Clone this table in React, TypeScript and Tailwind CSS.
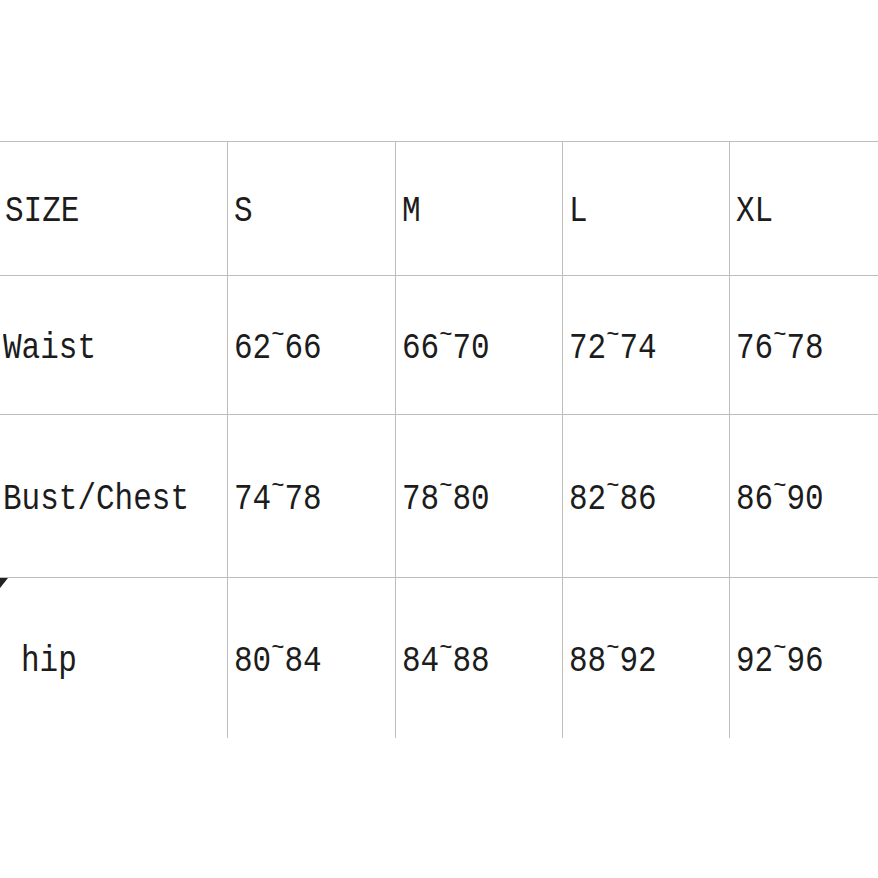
const header = ["SIZE", "S", "M", "L", "XL"];

const rows = [
  { label: "Waist", values: ["62~66", "66~70", "72~74", "76~78"], h: "h-[139px]" },
  { label: "Bust/Chest", values: ["74~78", "78~80", "82~86", "86~90"], h: "h-[163px]" },
  { label: "hip", values: ["80~84", "84~88", "88~92", "92~96"], h: "h-[160px]" },
];

function Range({ text }: { text: string }) {
  const [a, b] = text.split("~");
  return (
    <span className="inline-block scale-y-[1.2]">
      {a}
      <span className="relative -top-[13px] text-[22px]">~</span>
      {b}
    </span>
  );
}

export default function App() {
  return (
    <div className="w-[878px] h-[878px] bg-white overflow-hidden font-['Liberation_Mono',monospace] text-[31px] text-[#1c1c1c]">
      <div className="mt-[141px] grid grid-cols-[227px_168px_167px_167px_1fr] border-t border-[#bdbdbd]">
        {/* header row */}
        {header.map((h, i) => (
          <div
            key={h}
            className={`h-[134px] flex items-center pt-[6px] border-b border-[#bdbdbd] ${
              i === 0 ? "pl-[5px]" : "pl-[6px] border-l"
            }`}
          >
            <span className="inline-block scale-y-[1.2]">{h}</span>
          </div>
        ))}

        {rows.map((r, ri) => (
          <div key={r.label} className="contents">
            <div
              className={`${r.h} relative flex items-center pt-[6px] ${
                ri < rows.length - 1 ? "border-b border-[#bdbdbd]" : ""
              } ${r.label === "hip" ? "pl-[21px]" : "pl-[3px]"}`}
            >
              {r.label === "hip" && (
                <span className="absolute left-0 top-0 w-0 h-0 border-t-[10px] border-t-[#222] border-r-[8px] border-r-transparent" />
              )}
              <span className="inline-block scale-y-[1.2]">{r.label}</span>
            </div>
            {r.values.map((v, vi) => (
              <div
                key={vi}
                className={`${r.h} flex items-center pt-[6px] pl-[6px] border-l border-[#bdbdbd] ${
                  ri < rows.length - 1 ? "border-b" : ""
                }`}
              >
                <Range text={v} />
              </div>
            ))}
          </div>
        ))}
      </div>
    </div>
  );
}
